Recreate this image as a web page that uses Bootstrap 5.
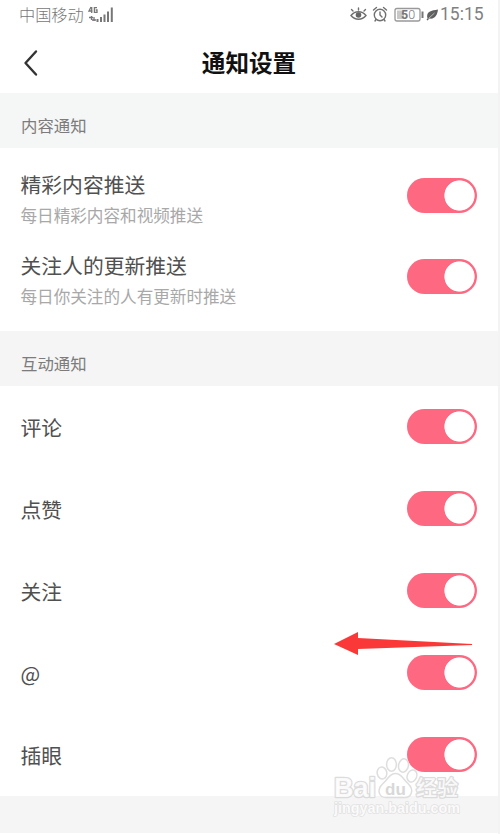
<!DOCTYPE html>
<html lang="zh-CN">
<head>
<meta charset="utf-8">
<meta name="viewport" content="width=device-width, initial-scale=1">
<title>通知设置</title>
<link href="https://cdn.jsdelivr.net/npm/bootstrap@5.3.0/dist/css/bootstrap.min.css" rel="stylesheet">
<style>
  body { font-family: "Noto Sans CJK SC", sans-serif; color: #505050; background: #fff; }
  .phone { width: 500px; height: 834px; border-right: 2px solid #f3f3f3; }
  .status { height: 30px; padding: 0 16px 2px 19px; font-size: 16.2px; line-height: 28px; color: #777; font-weight: 300; }
  .clock { font-family: Roboto, sans-serif; font-size: 17.5px; font-weight: 400; width: 42px; color: #808080; }
  .topbar { height: 63px; color: #111; }
  .topbar h1 { font-size: 23.6px; line-height: 36px; font-weight: 700; }
  .back { width: 62px; }
  .section-head { height: 55px; padding: 10px 21px 0; font-size: 16.4px; color: #7c7c7c; background: #f5f6f6; }
  .section-two { background: #f5f5f5; }
  .pushes { height: 183px; padding-top: 7px; }
  .setting { height: 82px; padding: 0 21.5px 0 20.5px; }
  .pushes .setting { height: 81px; }
  .pushes .wording { padding-top: 8px; }
  .label { font-size: 20.8px; line-height: 31px; }
  .desc { font-size: 16.6px; line-height: 31px; color: #a8a8a8; }
  .form-check-input.toggle { width: 70px; height: 35px; border: 0; border-radius: 18px; flex: none; }
  .form-check-input.toggle:checked {
    background-color: #ff6881;
    background-image: radial-gradient(circle closest-side, #fff 95%, rgba(255,255,255,0) 100%);
    background-size: 31px 31px; background-repeat: no-repeat; background-position: right 2px center;
  }
  .toggles .setting { padding-bottom: 1px; }
  .toggles .label { padding-top: 2px; }
  .footer-band { height: 37px; background: #f5f5f5; }
  .arrow { left: 332px; top: 630px; }
  .watermark { left: 330px; top: 752px; }
</style>
</head>
<body>
<div class="phone position-relative overflow-hidden d-flex flex-column">
  <div class="status d-flex align-items-center">
    <span>中国移动</span>
    <svg class="ms-1" width="27" height="18" viewBox="0 0 27 18" aria-hidden="true">
      <g fill="none" stroke="#777" stroke-width="1.3"><path d="M3 2L1 6h3.500M3.700 2v6M9 2.700H6.400v4.700H9V5H7.700"/><path d="M1 12.500h4M3.500 11v4M6 12v4M4 15h4"/></g>
      <path d="M8.500 14h2v3h-2zM12 12h2v5h-2zM15.500 9.500h2V17h-2zM19 6.500h2V17h-2zM22.800 2.500h2V17h-2z" fill="#777"/>
    </svg>
    <div class="ms-auto d-flex align-items-center">
      <svg width="91" height="18" viewBox="0 0 91 18" aria-hidden="true">
        <g fill="none" stroke="#707070" stroke-width="1.400" stroke-linecap="round">
          <path d="M2 10.500c4-5 11-5 15 0-4 5-11 5-15 0zM4 6L2.500 4.500M9.500 5V3M15 6L16.500 4.500"/>
          <circle cx="31" cy="10" r="5.700"/><path d="M31 7v3l2 2M24.500 5l3-2.500M37.500 5L34.500 2.500M27 14.500l-1 1.500M35 14.500l1 1.500"/>
        </g>
        <circle cx="9.500" cy="10" r="2.800" fill="#666"/>
        <rect x="46" y="3.500" width="25" height="12.500" rx="2" fill="none" stroke="#999" stroke-width="1.300"/>
        <path d="M48 5.500h7V14h-7z" fill="#c8c8c8"/><path d="M72.500 6.500h2V13h-2z" fill="#777"/>
        <text x="52" y="14.300" font-family="Roboto, sans-serif" font-size="12.500" fill="#777"><tspan font-weight="700">5</tspan>0</text>
        <path d="M78.500 13.500c-2-7 4-8 10.500-9-.5 5-3 10-8.500 9l-2 2-1-.7z" fill="#606060"/><path d="M79.500 13.500l6-5.500" stroke="#ddd" stroke-width=".7"/>
      </svg>
      <span class="clock">15:15</span>
    </div>
  </div>

  <header class="topbar d-flex align-items-center">
    <div class="back">
      <svg class="d-block" width="62" height="30" viewBox="0 0 62 30" aria-label="返回"><path d="M36 4.500L25.500 16 36 27.500" fill="none" stroke="#333" stroke-width="2.400" stroke-linecap="round" stroke-linejoin="round"/></svg>
    </div>
    <h1 class="flex-fill text-center m-0">通知设置</h1>
    <div class="back"></div>
  </header>

  <div class="section-head d-flex align-items-center">内容通知</div>
  <section class="pushes">
    <div class="setting d-flex align-items-center justify-content-between">
      <div class="wording"><div class="label">精彩内容推送</div><div class="desc">每日精彩内容和视频推送</div></div>
      <input class="form-check-input toggle m-0" type="checkbox" role="switch" aria-label="精彩内容推送" checked>
    </div>
    <div class="setting d-flex align-items-center justify-content-between">
      <div class="wording"><div class="label">关注人的更新推送</div><div class="desc">每日你关注的人有更新时推送</div></div>
      <input class="form-check-input toggle m-0" type="checkbox" role="switch" aria-label="关注人的更新推送" checked>
    </div>
  </section>

  <div class="section-head section-two d-flex align-items-center">互动通知</div>
  <section class="toggles">
    <div class="setting d-flex align-items-center justify-content-between"><span class="label">评论</span><input class="form-check-input toggle m-0" type="checkbox" role="switch" aria-label="评论" checked></div>
    <div class="setting d-flex align-items-center justify-content-between"><span class="label">点赞</span><input class="form-check-input toggle m-0" type="checkbox" role="switch" aria-label="点赞" checked></div>
    <div class="setting d-flex align-items-center justify-content-between"><span class="label">关注</span><input class="form-check-input toggle m-0" type="checkbox" role="switch" aria-label="关注" checked></div>
    <div class="setting d-flex align-items-center justify-content-between"><span class="label">@</span><input class="form-check-input toggle m-0" type="checkbox" role="switch" aria-label="@" checked></div>
    <div class="setting d-flex align-items-center justify-content-between"><span class="label">插眼</span><input class="form-check-input toggle m-0" type="checkbox" role="switch" aria-label="插眼" checked></div>
  </section>
  <div class="footer-band"></div>

  <svg class="arrow position-absolute" width="142" height="28" viewBox="0 0 142 28" aria-hidden="true">
    <path d="M2 14L26 2v6L140 14v1L26 19v6z" fill="#fb3838"/>
  </svg>

  <svg class="watermark position-absolute" width="136" height="72" viewBox="0 0 136 72" aria-hidden="true">
    <g fill="#fff" fill-opacity=".7" stroke="#d8d8d8" stroke-opacity=".85" stroke-width="1.500">
      <ellipse cx="52" cy="21" rx="4.800" ry="6" transform="rotate(-12 52 21)"/>
      <ellipse cx="61.500" cy="12.500" rx="4.900" ry="6.700"/>
      <ellipse cx="73.500" cy="13.500" rx="4.900" ry="6.700" transform="rotate(12 73.500 13.500)"/>
      <ellipse cx="82" cy="24" rx="4.700" ry="6.200" transform="rotate(22 82 24)"/>
      <path d="M65.500 21.500c6 0 7 5 12.500 10 7 7 3 14.500-4 14H57c-8 .5-11-7.500-4-14 5.500-5 6.500-10 12.500-10z"/>
    </g>
    <g paint-order="stroke" stroke-linejoin="round" font-family="'Liberation Sans', sans-serif" font-weight="700">
      <g fill="#fff" fill-opacity=".85" stroke="#d6d6d6" stroke-opacity=".85" stroke-width="2.600">
        <text x="4" y="45" font-size="28" textLength="42" lengthAdjust="spacingAndGlyphs">Bai</text>
        <text x="86" y="43" font-size="21" font-weight="500" textLength="42" font-family="'Noto Sans CJK SC', sans-serif">经验</text>
        <text x="4" y="61" font-size="14.500" textLength="126" lengthAdjust="spacingAndGlyphs" stroke-width="1.600" stroke-opacity=".65">jingyan.baidu.com</text>
      </g>
      <text x="55" y="43" font-size="17" textLength="21" fill="#d8d8d8">du</text>
    </g>
  </svg>
</div>
<script src="https://cdn.jsdelivr.net/npm/bootstrap@5.3.0/dist/js/bootstrap.bundle.min.js"></script>
</body>
</html>
